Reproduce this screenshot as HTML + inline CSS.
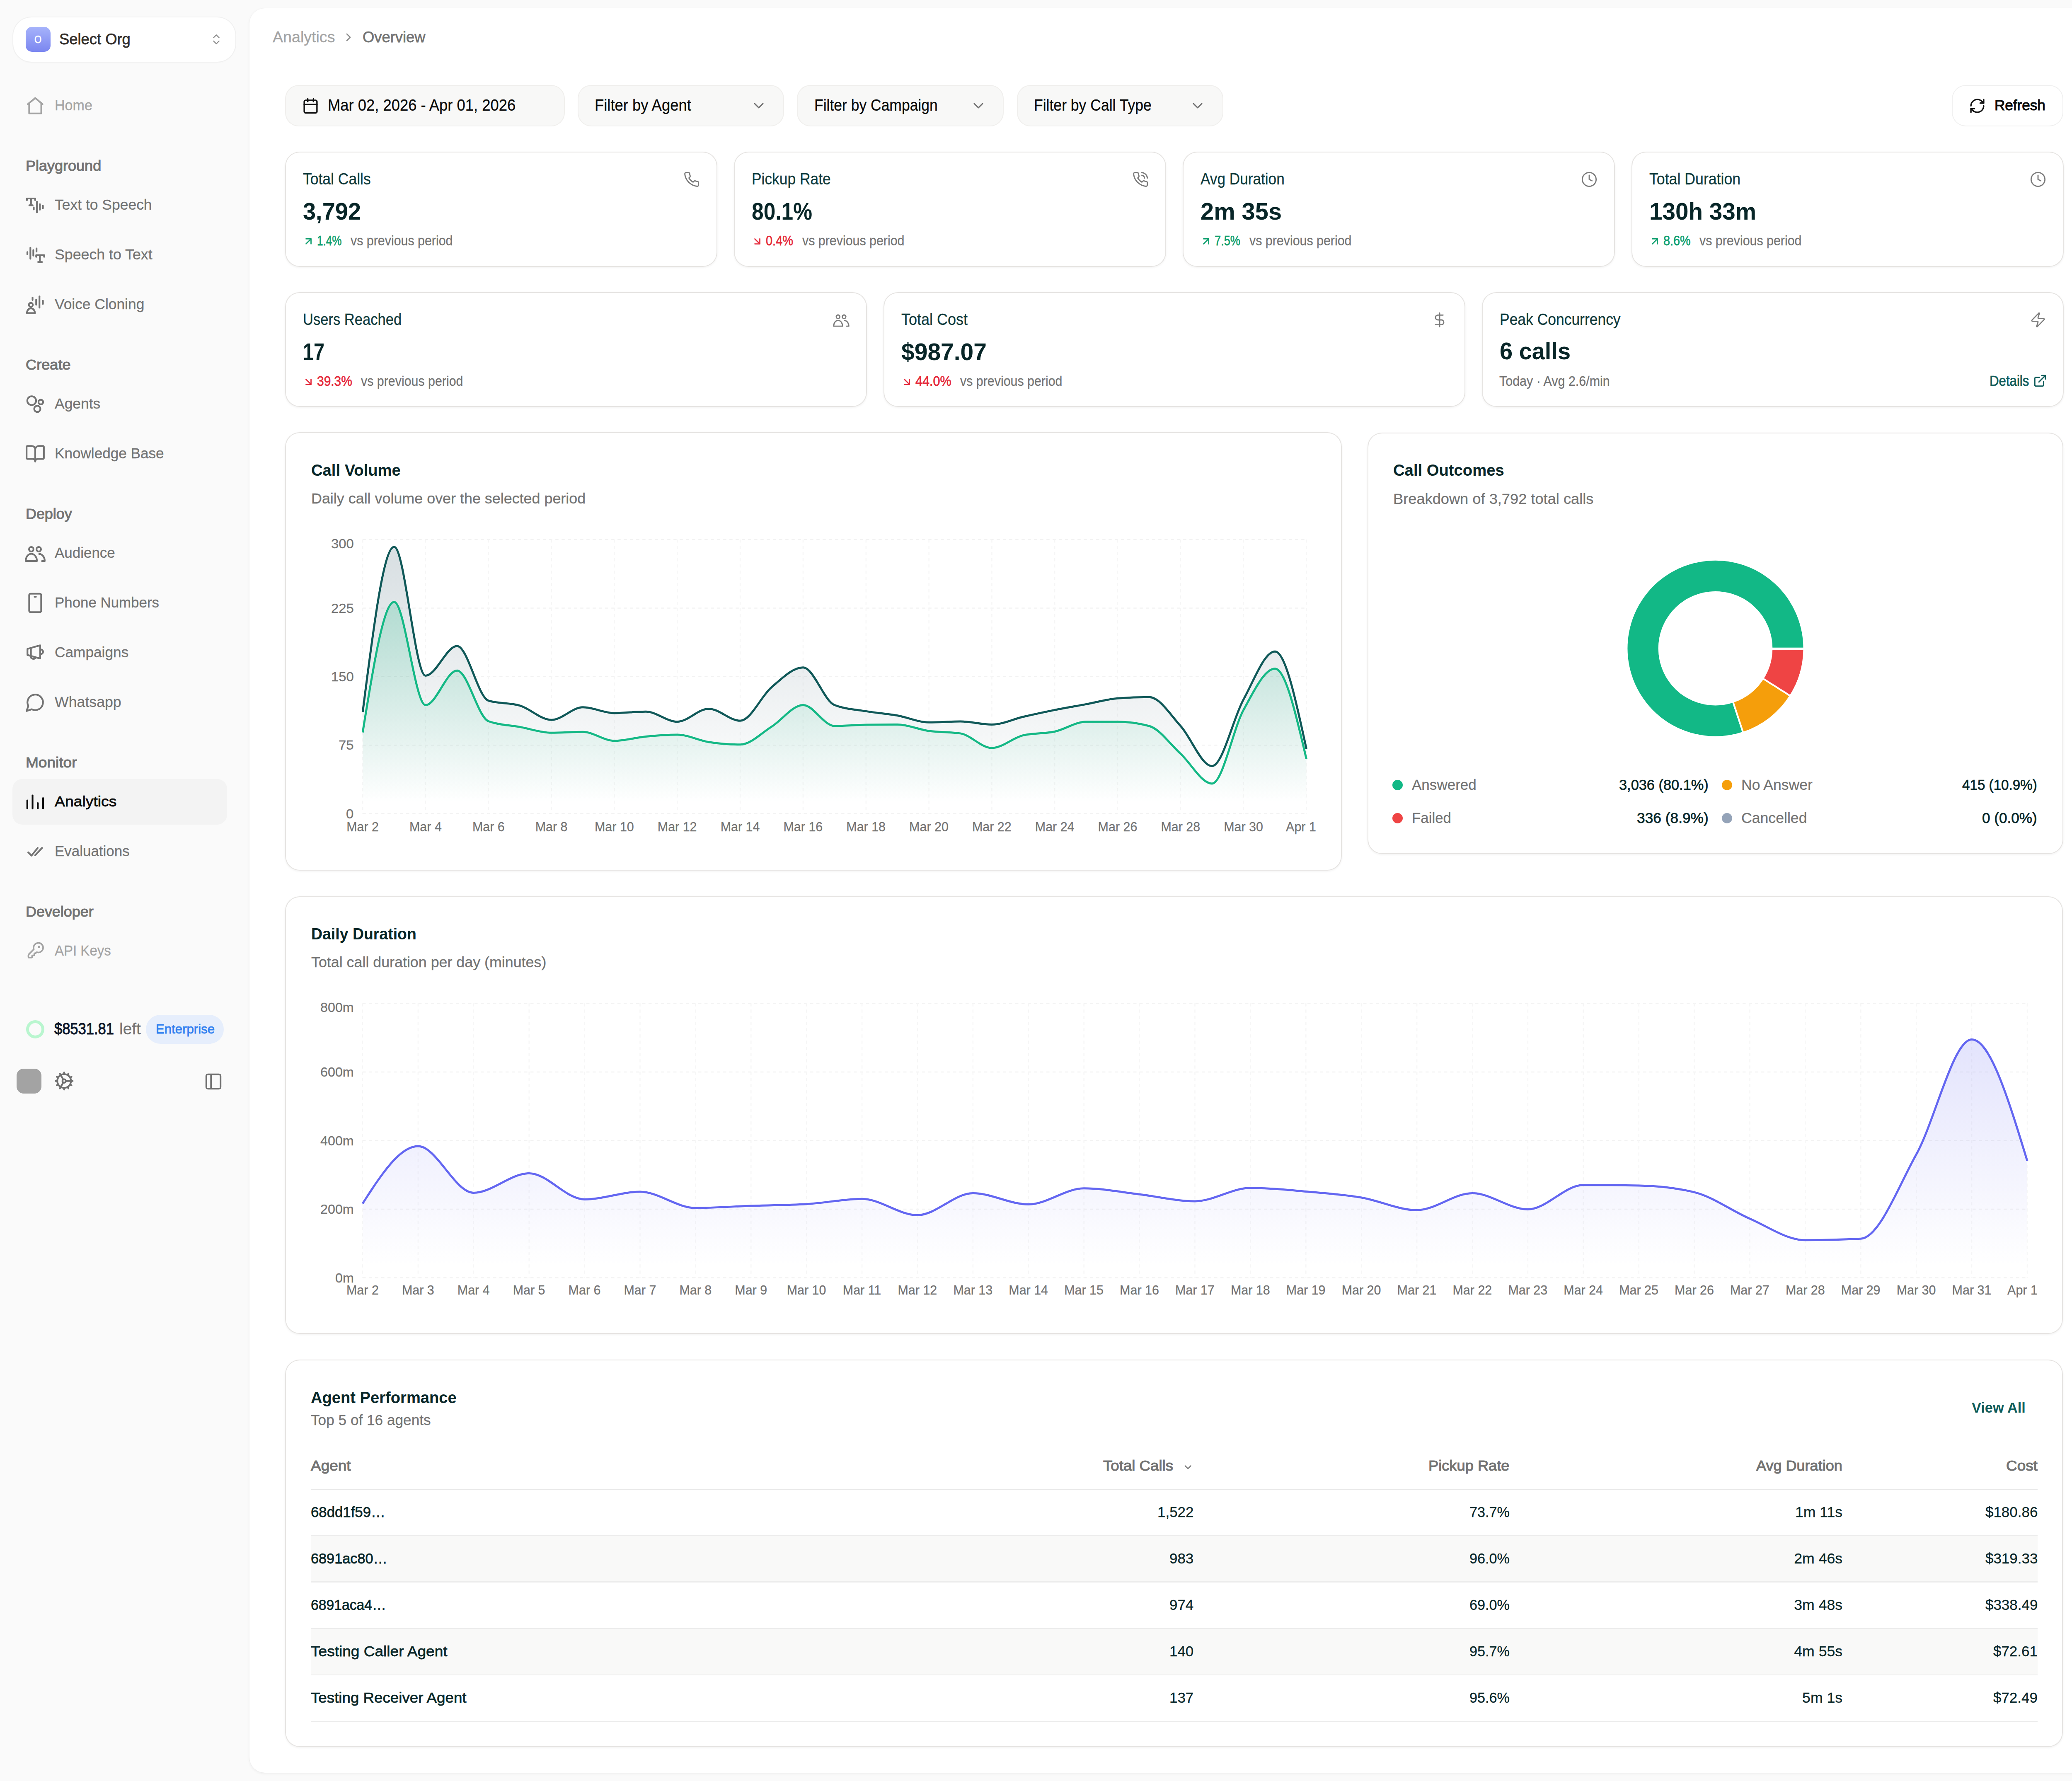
<!DOCTYPE html>
<html><head><meta charset="utf-8"><title>Analytics Overview</title>
<style>
html,body{margin:0;padding:0;}
body{width:5080px;height:4298px;position:relative;overflow:hidden;background:#fafafa;font-family:"Liberation Sans",sans-serif;}
.inset{position:absolute;left:602px;top:19.5px;width:4458px;height:4258px;background:#fff;border-radius:37px;box-shadow:0 0 2px rgba(0,0,0,0.06),0 2px 7px rgba(0,0,0,0.06);}
.botline{position:absolute;left:0;top:4277.5px;width:5080px;height:1.5px;background:#fff;}
.t{position:absolute;white-space:nowrap;line-height:1;transform-origin:0 0;}
.b{position:absolute;}
.ic{position:absolute;overflow:visible;}
.ch{position:absolute;left:0;top:0;pointer-events:none;}
</style></head><body>
<div class="inset"></div>
<div class="b" style="left:31.5px;top:41.5px;width:536.5px;height:107.0px;background:#fff;border-radius:44px;box-shadow:0 0 0 2px #f0f0f0,0 2px 4px rgba(0,0,0,0.03)"></div>
<div class="b" style="left:62.0px;top:64.6px;width:60.0px;height:60.0px;border-radius:15px;background:linear-gradient(180deg,#a6b3fb,#7b86f0)"></div>
<div class="t" style="left:83.4px;top:81.8px;font-size:26.08px;letter-spacing:0.00px;color:#ffffff;font-weight:400;-webkit-text-stroke:0.75px #ffffff;transform:scaleX(0.8500);">O</div>
<div class="t" style="left:143.0px;top:76.2px;font-size:37.36px;letter-spacing:0.00px;color:#332e2a;font-weight:400;-webkit-text-stroke:0.75px #332e2a;transform:scaleX(0.9735);">Select Org</div>
<svg class="ic" style="left:506.0px;top:78.5px;width:32.0px;height:32.0px" viewBox="0 0 24 24" fill="none" stroke="#8c8c8c" stroke-width="1.8" stroke-linecap="round" stroke-linejoin="round"><path d="m7 15 5 5 5-5"/><path d="m7 9 5-5 5 5"/></svg>
<svg class="ic" style="left:60.0px;top:229.5px;width:50.0px;height:50.0px" viewBox="0 0 24 24" fill="none" stroke="#a3a3a3" stroke-width="2.0" stroke-linecap="round" stroke-linejoin="round"><path d="M3.5 10.2 12 3.2l8.5 7"/><path d="M5 9v12h14V9"/></svg>
<div class="t" style="left:131.5px;top:236.4px;font-size:35.95px;letter-spacing:0.00px;color:#a3a3a3;font-weight:400;-webkit-text-stroke:0.3px #a3a3a3;transform:scaleX(0.9476);">Home</div>
<div class="t" style="left:62.0px;top:382.6px;font-size:34.54px;letter-spacing:0.00px;color:#737373;font-weight:400;-webkit-text-stroke:1.15px #737373;transform:scaleX(1.0427);">Playground</div>
<svg class="ic" style="left:60.0px;top:469.5px;width:50.0px;height:50.0px" viewBox="0 0 24 24" fill="none" stroke="#737373" stroke-width="2.0" stroke-linecap="round" stroke-linejoin="round"><path d="M2.4 6.2V4.3h9.5v1.9"/><path d="M7.1 4.3v7.9"/><path d="M5.2 12.2h3.8"/><path d="M10.3 14.7v2.3"/><path d="M14 8v12.4"/><path d="M17.4 10.9v6.4"/><path d="M20.9 12.8v2.8"/></svg>
<div class="t" style="left:131.5px;top:476.4px;font-size:35.95px;letter-spacing:0.00px;color:#737373;font-weight:400;-webkit-text-stroke:0.3px #737373;transform:scaleX(0.9868);">Text to Speech</div>
<svg class="ic" style="left:60.0px;top:589.5px;width:50.0px;height:50.0px" viewBox="0 0 24 24" fill="none" stroke="#737373" stroke-width="2.0" stroke-linecap="round" stroke-linejoin="round"><path d="M2.9 8.8v2.7"/><path d="M6.4 3.7v12.8"/><path d="M9.8 6.5v6.4"/><path d="M13.5 4.6v3.6"/><path d="M13.1 14.3v-1.9h9.2v1.9"/><path d="M17.4 12.4v7.9"/><path d="M15.4 20.3h4.4"/></svg>
<div class="t" style="left:131.5px;top:596.4px;font-size:35.95px;letter-spacing:0.00px;color:#737373;font-weight:400;-webkit-text-stroke:0.3px #737373;transform:scaleX(0.9937);">Speech to Text</div>
<svg class="ic" style="left:60.0px;top:709.5px;width:50.0px;height:50.0px" viewBox="0 0 24 24" fill="none" stroke="#737373" stroke-width="2.0" stroke-linecap="round" stroke-linejoin="round"><circle cx="6.9" cy="12.3" r="2.3"/><path d="M2.4 21.9a4.63 5.6 0 0 1 9.26 0z"/><path d="M8.9 3.9v2.8"/><path d="M13.1 6.2v6"/><path d="M16.9 2.5v13"/><path d="M20.9 7.6v3.7"/></svg>
<div class="t" style="left:131.5px;top:716.4px;font-size:35.95px;letter-spacing:0.00px;color:#737373;font-weight:400;-webkit-text-stroke:0.3px #737373;transform:scaleX(0.9843);">Voice Cloning</div>
<div class="t" style="left:62.0px;top:862.6px;font-size:34.54px;letter-spacing:0.00px;color:#737373;font-weight:400;-webkit-text-stroke:1.15px #737373;transform:scaleX(1.0478);">Create</div>
<svg class="ic" style="left:60.0px;top:949.5px;width:50.0px;height:50.0px" viewBox="0 0 24 24" fill="none" stroke="#737373" stroke-width="2.0" stroke-linecap="round" stroke-linejoin="round"><circle cx="7.9" cy="8.1" r="5.1"/><circle cx="18.5" cy="9.7" r="2.7"/><circle cx="14.4" cy="17.6" r="3.6"/></svg>
<div class="t" style="left:131.5px;top:956.4px;font-size:35.95px;letter-spacing:0.00px;color:#737373;font-weight:400;-webkit-text-stroke:0.3px #737373;transform:scaleX(0.9859);">Agents</div>
<svg class="ic" style="left:60.0px;top:1069.5px;width:50.0px;height:50.0px" viewBox="0 0 24 24" fill="none" stroke="#737373" stroke-width="2.0" stroke-linecap="round" stroke-linejoin="round"><path d="M12 7v14"/><path d="M3 18a1 1 0 0 1-1-1V4a1 1 0 0 1 1-1h5a4 4 0 0 1 4 4 4 4 0 0 1 4-4h5a1 1 0 0 1 1 1v13a1 1 0 0 1-1 1h-6a3 3 0 0 0-3 3 3 3 0 0 0-3-3z"/></svg>
<div class="t" style="left:131.5px;top:1076.4px;font-size:35.95px;letter-spacing:0.00px;color:#737373;font-weight:400;-webkit-text-stroke:0.3px #737373;transform:scaleX(0.9771);">Knowledge Base</div>
<div class="t" style="left:62.0px;top:1222.6px;font-size:34.54px;letter-spacing:0.00px;color:#737373;font-weight:400;-webkit-text-stroke:1.15px #737373;transform:scaleX(1.0383);">Deploy</div>
<svg class="ic" style="left:60.0px;top:1309.5px;width:50.0px;height:50.0px" viewBox="0 0 24 24" fill="none" stroke="#737373" stroke-width="2.0" stroke-linecap="round" stroke-linejoin="round"><circle cx="7.4" cy="7.4" r="2.6"/><circle cx="16.1" cy="7.4" r="2.6"/><path d="M1 21.1a6.47 8.4 0 0 1 12.94 0z"/><path d="M16.6 12.9a6.4 8.2 0 0 1 6.4 8.2h-3.2"/></svg>
<div class="t" style="left:131.5px;top:1316.4px;font-size:35.95px;letter-spacing:0.00px;color:#737373;font-weight:400;-webkit-text-stroke:0.3px #737373;transform:scaleX(0.9726);">Audience</div>
<svg class="ic" style="left:60.0px;top:1429.5px;width:50.0px;height:50.0px" viewBox="0 0 24 24" fill="none" stroke="#737373" stroke-width="2.0" stroke-linecap="round" stroke-linejoin="round"><rect width="13.9" height="21.4" x="5" y="1.3" rx="1.6"/><path d="M11.2 4.9h1.6"/></svg>
<div class="t" style="left:131.5px;top:1436.4px;font-size:35.95px;letter-spacing:0.00px;color:#737373;font-weight:400;-webkit-text-stroke:0.3px #737373;transform:scaleX(0.9702);">Phone Numbers</div>
<svg class="ic" style="left:60.0px;top:1549.5px;width:50.0px;height:50.0px" viewBox="0 0 24 24" fill="none" stroke="#737373" stroke-width="2.0" stroke-linecap="round" stroke-linejoin="round"><path d="M3 7.7 17.7 3.5v15.3L3 14.7z"/><path d="M7 6.8v9"/><path d="M18.2 8.3a2.9 2.7 0 0 1 0 5.4"/><path d="M6.6 16.1a3.3 3.3 0 0 0 6.1 1.5"/></svg>
<div class="t" style="left:131.5px;top:1556.4px;font-size:35.95px;letter-spacing:0.00px;color:#737373;font-weight:400;-webkit-text-stroke:0.3px #737373;transform:scaleX(0.9808);">Campaigns</div>
<svg class="ic" style="left:60.0px;top:1669.5px;width:50.0px;height:50.0px" viewBox="0 0 24 24" fill="none" stroke="#737373" stroke-width="2.0" stroke-linecap="round" stroke-linejoin="round"><path d="M7.9 20A9 9 0 1 0 4 16.1L2 22Z"/></svg>
<div class="t" style="left:131.5px;top:1676.4px;font-size:35.95px;letter-spacing:0.00px;color:#737373;font-weight:400;-webkit-text-stroke:0.3px #737373;transform:scaleX(0.9933);">Whatsapp</div>
<div class="t" style="left:62.0px;top:1822.6px;font-size:34.54px;letter-spacing:0.00px;color:#737373;font-weight:400;-webkit-text-stroke:1.15px #737373;transform:scaleX(1.0727);">Monitor</div>
<div class="b" style="left:30.0px;top:1880.0px;width:517.5px;height:110.0px;background:#f3f3f3;border-radius:24px"></div>
<svg class="ic" style="left:60.0px;top:1909.5px;width:50.0px;height:50.0px" viewBox="0 0 24 24" fill="none" stroke="#0a0a0a" stroke-width="2.0" stroke-linecap="round" stroke-linejoin="round"><path d="M2.8 10.3v9.4"/><path d="M8.9 4.6v15.1"/><path d="M15 13.5v6.2"/><path d="M21.1 7.7v12"/></svg>
<div class="t" style="left:131.5px;top:1916.4px;font-size:35.95px;letter-spacing:0.00px;color:#0a0a0a;font-weight:400;-webkit-text-stroke:0.75px #0a0a0a;transform:scaleX(1.0392);">Analytics</div>
<svg class="ic" style="left:60.0px;top:2029.5px;width:50.0px;height:50.0px" viewBox="0 0 24 24" fill="none" stroke="#737373" stroke-width="2.0" stroke-linecap="round" stroke-linejoin="round"><path d="M3.9 12.9 7.7 16.7 14.9 7.8"/><path d="M11.9 16.3 19.9 7.8"/></svg>
<div class="t" style="left:131.5px;top:2036.4px;font-size:35.95px;letter-spacing:0.00px;color:#737373;font-weight:400;-webkit-text-stroke:0.3px #737373;transform:scaleX(0.9725);">Evaluations</div>
<div class="t" style="left:62.0px;top:2182.6px;font-size:34.54px;letter-spacing:0.00px;color:#737373;font-weight:400;-webkit-text-stroke:1.15px #737373;transform:scaleX(1.0397);">Developer</div>
<svg class="ic" style="left:64.6px;top:2272.4px;width:42.5px;height:42.5px" viewBox="0 0 24 24" fill="none" stroke="#a3a3a3" stroke-width="2.1" stroke-linecap="round" stroke-linejoin="round"><path d="M2.586 17.414A2 2 0 0 0 2 18.828V21a1 1 0 0 0 1 1h3a1 1 0 0 0 1-1v-1a1 1 0 0 1 1-1h1a1 1 0 0 0 1-1v-1a1 1 0 0 1 1-1h.172a2 2 0 0 0 1.414-.586l.814-.814a6.5 6.5 0 1 0-4-4z"/><circle cx="16.5" cy="7.5" r=".6" fill="#a3a3a3"/></svg>
<div class="t" style="left:131.5px;top:2276.4px;font-size:35.95px;letter-spacing:0.00px;color:#a3a3a3;font-weight:400;-webkit-text-stroke:0.3px #a3a3a3;transform:scaleX(0.9185);">API Keys</div>
<div class="b" style="left:63px;top:2462px;width:44px;height:44px;border-radius:50%;box-sizing:border-box;border:7.5px solid #b9f6cf"></div>
<div class="t" style="left:131.0px;top:2464.0px;font-size:38.63px;letter-spacing:0.00px;color:#0f172a;font-weight:400;-webkit-text-stroke:1.15px #0f172a;transform:scaleX(0.8932);">$8531.81</div>
<div class="t" style="left:287.8px;top:2464.0px;font-size:38.63px;letter-spacing:0.00px;color:#737373;font-weight:400;-webkit-text-stroke:0.3px #737373;transform:scaleX(1.0060);">left</div>
<div class="b" style="left:351.7px;top:2449.3px;width:188.3px;height:69.7px;background:#e6eefc;border-radius:35px"></div>
<div class="t" style="left:375.5px;top:2467.6px;font-size:31.02px;letter-spacing:0.00px;color:#2f7ff0;font-weight:400;-webkit-text-stroke:0.75px #2f7ff0;transform:scaleX(1.0051);">Enterprise</div>
<div class="b" style="left:40.3px;top:2579.4px;width:59.6px;height:59.2px;background:#a3a3a3;border-radius:17px"></div>
<svg class="ic" style="left:130.2px;top:2584.2px;width:49.5px;height:49.5px" viewBox="0 0 24 24" fill="none" stroke="#6f6f6f" stroke-width="2.0" stroke-linecap="round" stroke-linejoin="round"><path d="M12 20a8 8 0 1 0 0-16 8 8 0 0 0 0 16Z"/><path d="M12 14a2 2 0 1 0 0-4 2 2 0 0 0 0 4Z"/><path d="M12 2v2"/><path d="M12 22v-2"/><path d="m17 20.66-1-1.73"/><path d="M11 10.27 7 3.34"/><path d="m20.66 17-1.73-1"/><path d="m3.34 7 1.73 1"/><path d="M14 12h8"/><path d="M2 12h2"/><path d="m20.66 7-1.73 1"/><path d="m3.34 17 1.73-1"/><path d="m17 3.34-1 1.73"/><path d="m11 13.73-4 6.93"/></svg>
<svg class="ic" style="left:492.0px;top:2586.5px;width:46.0px;height:46.0px" viewBox="0 0 24 24" fill="none" stroke="#6f6f6f" stroke-width="2" stroke-linecap="round" stroke-linejoin="round"><rect width="18" height="18" x="3" y="3" rx="2"/><path d="M9 3v18"/></svg>
<div class="t" style="left:657.6px;top:70.8px;font-size:37.22px;letter-spacing:0.00px;color:#a3a3a3;font-weight:400;-webkit-text-stroke:0.3px #a3a3a3;transform:scaleX(1.0104);">Analytics</div>
<svg class="ic" style="left:825.0px;top:74.0px;width:32.0px;height:32.0px" viewBox="0 0 24 24" fill="none" stroke="#8a8a8a" stroke-width="2" stroke-linecap="round" stroke-linejoin="round"><path d="m9 18 6-6-6-6"/></svg>
<div class="t" style="left:874.5px;top:70.8px;font-size:37.22px;letter-spacing:0.00px;color:#737373;font-weight:400;-webkit-text-stroke:0.75px #737373;transform:scaleX(0.9772);">Overview</div>
<div class="b" style="left:688.0px;top:205.0px;width:675.0px;height:99.5px;background:#f8f8f7;border-radius:33px;box-shadow:inset 0 0 0 2px #f0efed"></div>
<svg class="ic" style="left:729.0px;top:235.0px;width:41.0px;height:41.0px" viewBox="0 0 24 24" fill="none" stroke="#111111" stroke-width="2" stroke-linecap="round" stroke-linejoin="round"><path d="M8 2v4"/><path d="M16 2v4"/><rect width="18" height="18" x="3" y="4" rx="2"/><path d="M3 10h18"/></svg>
<div class="t" style="left:791.0px;top:235.2px;font-size:38.07px;letter-spacing:0.00px;color:#0a0a0a;font-weight:400;-webkit-text-stroke:0.3px #0a0a0a;transform:scaleX(0.9561);">Mar 02, 2026 - Apr 01, 2026</div>
<div class="b" style="left:1393.8px;top:205.0px;width:498.2px;height:99.5px;background:#f8f8f7;border-radius:33px;box-shadow:inset 0 0 0 2px #f0efed"></div>
<div class="t" style="left:1435.0px;top:235.2px;font-size:38.07px;letter-spacing:0.00px;color:#0a0a0a;font-weight:400;-webkit-text-stroke:0.3px #0a0a0a;transform:scaleX(0.9567);">Filter by Agent</div>
<svg class="ic" style="left:1811.0px;top:234.5px;width:40.0px;height:40.0px" viewBox="0 0 24 24" fill="none" stroke="#6f6f6f" stroke-width="1.8" stroke-linecap="round" stroke-linejoin="round"><path d="m6 9 6 6 6-6"/></svg>
<div class="b" style="left:1923.0px;top:205.0px;width:499.0px;height:99.5px;background:#f8f8f7;border-radius:33px;box-shadow:inset 0 0 0 2px #f0efed"></div>
<div class="t" style="left:1965.0px;top:235.2px;font-size:38.07px;letter-spacing:0.00px;color:#0a0a0a;font-weight:400;-webkit-text-stroke:0.3px #0a0a0a;transform:scaleX(0.9320);">Filter by Campaign</div>
<svg class="ic" style="left:2341.0px;top:234.5px;width:40.0px;height:40.0px" viewBox="0 0 24 24" fill="none" stroke="#6f6f6f" stroke-width="1.8" stroke-linecap="round" stroke-linejoin="round"><path d="m6 9 6 6 6-6"/></svg>
<div class="b" style="left:2453.7px;top:205.0px;width:498.8px;height:99.5px;background:#f8f8f7;border-radius:33px;box-shadow:inset 0 0 0 2px #f0efed"></div>
<div class="t" style="left:2495.0px;top:235.2px;font-size:38.07px;letter-spacing:0.00px;color:#0a0a0a;font-weight:400;-webkit-text-stroke:0.3px #0a0a0a;transform:scaleX(0.9336);">Filter by Call Type</div>
<svg class="ic" style="left:2870.0px;top:234.5px;width:40.0px;height:40.0px" viewBox="0 0 24 24" fill="none" stroke="#6f6f6f" stroke-width="1.8" stroke-linecap="round" stroke-linejoin="round"><path d="m6 9 6 6 6-6"/></svg>
<div class="b" style="left:4709.5px;top:205.0px;width:269.5px;height:99.5px;background:#fff;border-radius:34px;box-shadow:inset 0 0 0 2px #f0f0f0"></div>
<svg class="ic" style="left:4750.5px;top:234.8px;width:41.0px;height:41.0px" viewBox="0 0 24 24" fill="none" stroke="#111111" stroke-width="2" stroke-linecap="round" stroke-linejoin="round"><path d="M3 12a9 9 0 0 1 9-9 9.75 9.75 0 0 1 6.74 2.74L21 8"/><path d="M21 3v5h-5"/><path d="M21 12a9 9 0 0 1-9 9 9.75 9.75 0 0 1-6.74-2.74L3 16"/><path d="M8 16H3v5"/></svg>
<div class="t" style="left:4813.0px;top:236.7px;font-size:35.67px;letter-spacing:0.00px;color:#0a0a0a;font-weight:400;-webkit-text-stroke:1.15px #0a0a0a;transform:scaleX(0.9840);">Refresh</div>
<div class="b" style="left:688.0px;top:366.0px;width:1043.0px;height:277.5px;background:#fff;border-radius:35px;box-shadow:inset 0 0 0 2px #e6e4e2,0 2px 5px rgba(0,0,0,0.05)"></div>
<div class="t" style="left:730.5px;top:413.2px;font-size:38.63px;letter-spacing:0.00px;color:#0f3a3b;font-weight:400;-webkit-text-stroke:0.3px #0f3a3b;transform:scaleX(0.9188);">Total Calls</div>
<div class="t" style="left:731.0px;top:481.9px;font-size:57.81px;letter-spacing:0.00px;color:#082628;font-weight:700;transform:scaleX(0.9679);">3,792</div>
<svg class="ic" style="left:730.0px;top:568.0px;width:29.0px;height:29.0px" viewBox="0 0 24 24" fill="none" stroke="#0f9f6e" stroke-width="2.3" stroke-linecap="round" stroke-linejoin="round"><path d="M7 7h10v10"/><path d="M7 17 17 7"/></svg>
<div class="t" style="left:764.5px;top:564.3px;font-size:33.41px;letter-spacing:0.00px;color:#0f9f6e;font-weight:400;-webkit-text-stroke:0.75px #0f9f6e;transform:scaleX(0.7829);">1.4%</div>
<div class="t" style="left:846.1px;top:564.3px;font-size:33.41px;letter-spacing:0.00px;color:#737373;font-weight:400;-webkit-text-stroke:0.3px #737373;transform:scaleX(0.9091);">vs previous period</div>
<svg class="ic" style="left:1649.0px;top:413.0px;width:40.0px;height:40.0px" viewBox="0 0 24 24" fill="none" stroke="#7a7a7a" stroke-width="1.7" stroke-linecap="round" stroke-linejoin="round"><path d="M22 16.92v3a2 2 0 0 1-2.18 2 19.79 19.79 0 0 1-8.63-3.07 19.5 19.5 0 0 1-6-6 19.79 19.79 0 0 1-3.07-8.67A2 2 0 0 1 4.11 2h3a2 2 0 0 1 2 1.72 12.84 12.84 0 0 0 .7 2.81 2 2 0 0 1-.45 2.11L8.09 9.91a16 16 0 0 0 6 6l1.270-1.27a2 2 0 0 1 2.11-.45 12.84 12.84 0 0 0 2.81.7A2 2 0 0 1 22 16.92z"/></svg>
<div class="b" style="left:1771.0px;top:366.0px;width:1043.0px;height:277.5px;background:#fff;border-radius:35px;box-shadow:inset 0 0 0 2px #e6e4e2,0 2px 5px rgba(0,0,0,0.05)"></div>
<div class="t" style="left:1813.5px;top:413.2px;font-size:38.63px;letter-spacing:0.00px;color:#0f3a3b;font-weight:400;-webkit-text-stroke:0.3px #0f3a3b;transform:scaleX(0.9154);">Pickup Rate</div>
<div class="t" style="left:1814.0px;top:481.9px;font-size:57.81px;letter-spacing:0.00px;color:#082628;font-weight:700;transform:scaleX(0.8908);">80.1%</div>
<svg class="ic" style="left:1813.0px;top:568.0px;width:29.0px;height:29.0px" viewBox="0 0 24 24" fill="none" stroke="#e5283a" stroke-width="2.3" stroke-linecap="round" stroke-linejoin="round"><path d="m7 7 10 10"/><path d="M17 7v10H7"/></svg>
<div class="t" style="left:1847.5px;top:564.3px;font-size:33.41px;letter-spacing:0.00px;color:#e5283a;font-weight:400;-webkit-text-stroke:0.75px #e5283a;transform:scaleX(0.8670);">0.4%</div>
<div class="t" style="left:1935.5px;top:564.3px;font-size:33.41px;letter-spacing:0.00px;color:#737373;font-weight:400;-webkit-text-stroke:0.3px #737373;transform:scaleX(0.9091);">vs previous period</div>
<svg class="ic" style="left:2732.0px;top:413.0px;width:40.0px;height:40.0px" viewBox="0 0 24 24" fill="none" stroke="#7a7a7a" stroke-width="1.7" stroke-linecap="round" stroke-linejoin="round"><path d="M22 16.92v3a2 2 0 0 1-2.18 2 19.79 19.79 0 0 1-8.63-3.07 19.5 19.5 0 0 1-6-6 19.79 19.79 0 0 1-3.07-8.67A2 2 0 0 1 4.11 2h3a2 2 0 0 1 2 1.72 12.84 12.84 0 0 0 .7 2.81 2 2 0 0 1-.45 2.11L8.09 9.91a16 16 0 0 0 6 6l1.27-1.27a2 2 0 0 1 2.11-.45 12.84 12.84 0 0 0 2.81.7A2 2 0 0 1 22 16.92z"/><path d="M14.05 2a9 9 0 0 1 8 7.94"/><path d="M14.05 6A5 5 0 0 1 18 10"/></svg>
<div class="b" style="left:2854.0px;top:366.0px;width:1043.0px;height:277.5px;background:#fff;border-radius:35px;box-shadow:inset 0 0 0 2px #e6e4e2,0 2px 5px rgba(0,0,0,0.05)"></div>
<div class="t" style="left:2896.5px;top:413.2px;font-size:38.63px;letter-spacing:0.00px;color:#0f3a3b;font-weight:400;-webkit-text-stroke:0.3px #0f3a3b;transform:scaleX(0.9108);">Avg Duration</div>
<div class="t" style="left:2897.0px;top:481.9px;font-size:57.81px;letter-spacing:0.00px;color:#082628;font-weight:700;">2m 35s</div>
<svg class="ic" style="left:2896.0px;top:568.0px;width:29.0px;height:29.0px" viewBox="0 0 24 24" fill="none" stroke="#0f9f6e" stroke-width="2.3" stroke-linecap="round" stroke-linejoin="round"><path d="M7 7h10v10"/><path d="M7 17 17 7"/></svg>
<div class="t" style="left:2930.5px;top:564.3px;font-size:33.41px;letter-spacing:0.00px;color:#0f9f6e;font-weight:400;-webkit-text-stroke:0.75px #0f9f6e;transform:scaleX(0.8144);">7.5%</div>
<div class="t" style="left:3014.5px;top:564.3px;font-size:33.41px;letter-spacing:0.00px;color:#737373;font-weight:400;-webkit-text-stroke:0.3px #737373;transform:scaleX(0.9091);">vs previous period</div>
<svg class="ic" style="left:3815.0px;top:413.0px;width:40.0px;height:40.0px" viewBox="0 0 24 24" fill="none" stroke="#7a7a7a" stroke-width="1.7" stroke-linecap="round" stroke-linejoin="round"><circle cx="12" cy="12" r="10"/><polyline points="12 6 12 12 16 14"/></svg>
<div class="b" style="left:3937.0px;top:366.0px;width:1043.0px;height:277.5px;background:#fff;border-radius:35px;box-shadow:inset 0 0 0 2px #e6e4e2,0 2px 5px rgba(0,0,0,0.05)"></div>
<div class="t" style="left:3979.5px;top:413.2px;font-size:38.63px;letter-spacing:0.00px;color:#0f3a3b;font-weight:400;-webkit-text-stroke:0.3px #0f3a3b;transform:scaleX(0.9238);">Total Duration</div>
<div class="t" style="left:3980.0px;top:481.9px;font-size:57.81px;letter-spacing:0.00px;color:#082628;font-weight:700;transform:scaleX(0.9792);">130h 33m</div>
<svg class="ic" style="left:3979.0px;top:568.0px;width:29.0px;height:29.0px" viewBox="0 0 24 24" fill="none" stroke="#0f9f6e" stroke-width="2.3" stroke-linecap="round" stroke-linejoin="round"><path d="M7 7h10v10"/><path d="M7 17 17 7"/></svg>
<div class="t" style="left:4013.5px;top:564.3px;font-size:33.41px;letter-spacing:0.00px;color:#0f9f6e;font-weight:400;-webkit-text-stroke:0.75px #0f9f6e;transform:scaleX(0.8617);">8.6%</div>
<div class="t" style="left:4101.1px;top:564.3px;font-size:33.41px;letter-spacing:0.00px;color:#737373;font-weight:400;-webkit-text-stroke:0.3px #737373;transform:scaleX(0.9091);">vs previous period</div>
<svg class="ic" style="left:4898.0px;top:413.0px;width:40.0px;height:40.0px" viewBox="0 0 24 24" fill="none" stroke="#7a7a7a" stroke-width="1.7" stroke-linecap="round" stroke-linejoin="round"><circle cx="12" cy="12" r="10"/><polyline points="12 6 12 12 16 14"/></svg>
<div class="b" style="left:688.0px;top:705.0px;width:1404.0px;height:277.0px;background:#fff;border-radius:35px;box-shadow:inset 0 0 0 2px #e6e4e2,0 2px 5px rgba(0,0,0,0.05)"></div>
<div class="t" style="left:730.5px;top:752.2px;font-size:38.63px;letter-spacing:0.00px;color:#0f3a3b;font-weight:400;-webkit-text-stroke:0.3px #0f3a3b;transform:scaleX(0.8946);">Users Reached</div>
<div class="t" style="left:731.0px;top:820.9px;font-size:57.81px;letter-spacing:0.00px;color:#082628;font-weight:700;transform:scaleX(0.8088);">17</div>
<svg class="ic" style="left:730.0px;top:907.0px;width:29.0px;height:29.0px" viewBox="0 0 24 24" fill="none" stroke="#e5283a" stroke-width="2.3" stroke-linecap="round" stroke-linejoin="round"><path d="m7 7 10 10"/><path d="M17 7v10H7"/></svg>
<div class="t" style="left:764.5px;top:903.3px;font-size:33.41px;letter-spacing:0.00px;color:#e5283a;font-weight:400;-webkit-text-stroke:0.75px #e5283a;transform:scaleX(0.8954);">39.3%</div>
<div class="t" style="left:871.3px;top:903.3px;font-size:33.41px;letter-spacing:0.00px;color:#737373;font-weight:400;-webkit-text-stroke:0.3px #737373;transform:scaleX(0.9091);">vs previous period</div>
<svg class="ic" style="left:2010.0px;top:752.0px;width:40.0px;height:40.0px" viewBox="0 0 24 24" fill="none" stroke="#7a7a7a" stroke-width="1.7" stroke-linecap="round" stroke-linejoin="round"><circle cx="7.4" cy="7.4" r="2.6"/><circle cx="16.1" cy="7.4" r="2.6"/><path d="M1 21.1a6.47 8.4 0 0 1 12.94 0z"/><path d="M16.6 12.9a6.4 8.2 0 0 1 6.4 8.2h-3.2"/></svg>
<div class="b" style="left:2132.0px;top:705.0px;width:1404.0px;height:277.0px;background:#fff;border-radius:35px;box-shadow:inset 0 0 0 2px #e6e4e2,0 2px 5px rgba(0,0,0,0.05)"></div>
<div class="t" style="left:2174.5px;top:752.2px;font-size:38.63px;letter-spacing:0.00px;color:#0f3a3b;font-weight:400;-webkit-text-stroke:0.3px #0f3a3b;transform:scaleX(0.9323);">Total Cost</div>
<div class="t" style="left:2175.0px;top:820.9px;font-size:57.81px;letter-spacing:0.00px;color:#082628;font-weight:700;transform:scaleX(0.9860);">$987.07</div>
<svg class="ic" style="left:2174.0px;top:907.0px;width:29.0px;height:29.0px" viewBox="0 0 24 24" fill="none" stroke="#e5283a" stroke-width="2.3" stroke-linecap="round" stroke-linejoin="round"><path d="m7 7 10 10"/><path d="M17 7v10H7"/></svg>
<div class="t" style="left:2208.5px;top:903.3px;font-size:33.41px;letter-spacing:0.00px;color:#e5283a;font-weight:400;-webkit-text-stroke:0.75px #e5283a;transform:scaleX(0.9155);">44.0%</div>
<div class="t" style="left:2317.2px;top:903.3px;font-size:33.41px;letter-spacing:0.00px;color:#737373;font-weight:400;-webkit-text-stroke:0.3px #737373;transform:scaleX(0.9091);">vs previous period</div>
<svg class="ic" style="left:3454.0px;top:752.0px;width:40.0px;height:40.0px" viewBox="0 0 24 24" fill="none" stroke="#7a7a7a" stroke-width="1.7" stroke-linecap="round" stroke-linejoin="round"><line x1="12" x2="12" y1="2" y2="22"/><path d="M17 5H9.5a3.5 3.5 0 0 0 0 7h5a3.5 3.5 0 0 1 0 7H6"/></svg>
<div class="b" style="left:3576.0px;top:705.0px;width:1404.0px;height:277.0px;background:#fff;border-radius:35px;box-shadow:inset 0 0 0 2px #e6e4e2,0 2px 5px rgba(0,0,0,0.05)"></div>
<div class="t" style="left:3618.5px;top:752.2px;font-size:38.63px;letter-spacing:0.00px;color:#0f3a3b;font-weight:400;-webkit-text-stroke:0.3px #0f3a3b;transform:scaleX(0.9177);">Peak Concurrency</div>
<div class="t" style="left:3619.0px;top:818.9px;font-size:57.81px;letter-spacing:0.00px;color:#082628;font-weight:700;transform:scaleX(0.9674);">6 calls</div>
<div class="t" style="left:3618.0px;top:903.3px;font-size:33.41px;letter-spacing:0.00px;color:#737373;font-weight:400;-webkit-text-stroke:0.3px #737373;transform:scaleX(0.9108);">Today · Avg 2.6/min</div>
<div class="t" style="left:4801.0px;top:902.3px;font-size:34.54px;letter-spacing:0.00px;color:#0f5c5a;font-weight:400;-webkit-text-stroke:0.75px #0f5c5a;transform:scaleX(0.9037);">Details</div>
<svg class="ic" style="left:4906.0px;top:902.0px;width:34.0px;height:34.0px" viewBox="0 0 24 24" fill="none" stroke="#0f5c5a" stroke-width="2.1" stroke-linecap="round" stroke-linejoin="round"><path d="M15 3h6v6"/><path d="M10 14 21 3"/><path d="M18 13v6a2 2 0 0 1-2 2H5a2 2 0 0 1-2-2V8a2 2 0 0 1 2-2h6"/></svg>
<svg class="ic" style="left:4898.0px;top:752.0px;width:40.0px;height:40.0px" viewBox="0 0 24 24" fill="none" stroke="#7a7a7a" stroke-width="1.7" stroke-linecap="round" stroke-linejoin="round"><path d="M4 14a1 1 0 0 1-.78-1.63l9.9-10.2a.5.5 0 0 1 .86.46l-1.92 6.02A1 1 0 0 0 13 10h7a1 1 0 0 1 .78 1.63l-9.9 10.2a.5.5 0 0 1-.86-.46l1.92-6.02A1 1 0 0 0 11 14z"/></svg>
<div class="b" style="left:688.0px;top:1043.4px;width:2550.0px;height:1057.6px;background:#fff;border-radius:35px;box-shadow:inset 0 0 0 2px #e6e4e2,0 2px 5px rgba(0,0,0,0.05)"></div>
<div class="t" style="left:750.5px;top:1115.5px;font-size:38.77px;letter-spacing:0.00px;color:#082628;font-weight:700;transform:scaleX(0.9854);">Call Volume</div>
<div class="t" style="left:750.5px;top:1185.7px;font-size:35.67px;letter-spacing:0.00px;color:#737373;font-weight:400;-webkit-text-stroke:0.3px #737373;transform:scaleX(1.0064);">Daily call volume over the selected period</div>
<div class="t" style="left:835.3px;top:1948.7px;font-size:30.45px;letter-spacing:0.00px;color:#737373;font-weight:400;-webkit-text-stroke:0.3px #737373;transform:scaleX(1.0800);">0</div>
<div class="t" style="left:817.0px;top:1783.3px;font-size:30.45px;letter-spacing:0.00px;color:#737373;font-weight:400;-webkit-text-stroke:0.3px #737373;transform:scaleX(1.0800);">75</div>
<div class="t" style="left:798.6px;top:1617.9px;font-size:30.45px;letter-spacing:0.00px;color:#737373;font-weight:400;-webkit-text-stroke:0.3px #737373;transform:scaleX(1.0800);">150</div>
<div class="t" style="left:798.6px;top:1452.5px;font-size:30.45px;letter-spacing:0.00px;color:#737373;font-weight:400;-webkit-text-stroke:0.3px #737373;transform:scaleX(1.0800);">225</div>
<div class="t" style="left:798.6px;top:1296.6px;font-size:30.45px;letter-spacing:0.00px;color:#737373;font-weight:400;-webkit-text-stroke:0.3px #737373;transform:scaleX(1.0800);">300</div>
<div class="t" style="left:836.2px;top:1980.1px;font-size:30.45px;letter-spacing:0.00px;color:#737373;font-weight:400;-webkit-text-stroke:0.3px #737373;">Mar 2</div>
<div class="t" style="left:988.0px;top:1980.1px;font-size:30.45px;letter-spacing:0.00px;color:#737373;font-weight:400;-webkit-text-stroke:0.3px #737373;">Mar 4</div>
<div class="t" style="left:1139.9px;top:1980.1px;font-size:30.45px;letter-spacing:0.00px;color:#737373;font-weight:400;-webkit-text-stroke:0.3px #737373;">Mar 6</div>
<div class="t" style="left:1291.7px;top:1980.1px;font-size:30.45px;letter-spacing:0.00px;color:#737373;font-weight:400;-webkit-text-stroke:0.3px #737373;">Mar 8</div>
<div class="t" style="left:1435.0px;top:1980.1px;font-size:30.45px;letter-spacing:0.00px;color:#737373;font-weight:400;-webkit-text-stroke:0.3px #737373;">Mar 10</div>
<div class="t" style="left:1586.8px;top:1980.1px;font-size:30.45px;letter-spacing:0.00px;color:#737373;font-weight:400;-webkit-text-stroke:0.3px #737373;">Mar 12</div>
<div class="t" style="left:1738.7px;top:1980.1px;font-size:30.45px;letter-spacing:0.00px;color:#737373;font-weight:400;-webkit-text-stroke:0.3px #737373;">Mar 14</div>
<div class="t" style="left:1890.5px;top:1980.1px;font-size:30.45px;letter-spacing:0.00px;color:#737373;font-weight:400;-webkit-text-stroke:0.3px #737373;">Mar 16</div>
<div class="t" style="left:2042.3px;top:1980.1px;font-size:30.45px;letter-spacing:0.00px;color:#737373;font-weight:400;-webkit-text-stroke:0.3px #737373;">Mar 18</div>
<div class="t" style="left:2194.1px;top:1980.1px;font-size:30.45px;letter-spacing:0.00px;color:#737373;font-weight:400;-webkit-text-stroke:0.3px #737373;">Mar 20</div>
<div class="t" style="left:2345.9px;top:1980.1px;font-size:30.45px;letter-spacing:0.00px;color:#737373;font-weight:400;-webkit-text-stroke:0.3px #737373;">Mar 22</div>
<div class="t" style="left:2497.8px;top:1980.1px;font-size:30.45px;letter-spacing:0.00px;color:#737373;font-weight:400;-webkit-text-stroke:0.3px #737373;">Mar 24</div>
<div class="t" style="left:2649.6px;top:1980.1px;font-size:30.45px;letter-spacing:0.00px;color:#737373;font-weight:400;-webkit-text-stroke:0.3px #737373;">Mar 26</div>
<div class="t" style="left:2801.4px;top:1980.1px;font-size:30.45px;letter-spacing:0.00px;color:#737373;font-weight:400;-webkit-text-stroke:0.3px #737373;">Mar 28</div>
<div class="t" style="left:2953.2px;top:1980.1px;font-size:30.45px;letter-spacing:0.00px;color:#737373;font-weight:400;-webkit-text-stroke:0.3px #737373;">Mar 30</div>
<div class="t" style="left:3103.1px;top:1980.1px;font-size:30.45px;letter-spacing:0.00px;color:#737373;font-weight:400;-webkit-text-stroke:0.3px #737373;">Apr 1</div>
<div class="b" style="left:3300.0px;top:1044.0px;width:1679.0px;height:1017.0px;background:#fff;border-radius:35px;box-shadow:inset 0 0 0 2px #e6e4e2,0 2px 5px rgba(0,0,0,0.05)"></div>
<div class="t" style="left:3362.0px;top:1116.0px;font-size:38.77px;letter-spacing:0.00px;color:#082628;font-weight:700;transform:scaleX(0.9865);">Call Outcomes</div>
<div class="t" style="left:3362.0px;top:1186.7px;font-size:35.67px;letter-spacing:0.00px;color:#737373;font-weight:400;-webkit-text-stroke:0.3px #737373;transform:scaleX(1.0162);">Breakdown of 3,792 total calls</div>
<div class="b" style="left:3360.2px;top:1882.1px;width:25px;height:25px;border-radius:50%;background:#12b886"></div>
<div class="t" style="left:3407.2px;top:1877.3px;font-size:35.67px;letter-spacing:0.00px;color:#737373;font-weight:400;-webkit-text-stroke:0.3px #737373;transform:scaleX(0.9827);">Answered</div>
<div class="t" style="left:3907.0px;top:1877.3px;font-size:35.67px;letter-spacing:0.00px;color:#082628;font-weight:400;-webkit-text-stroke:0.75px #082628;transform:scaleX(0.9632);">3,036 (80.1%)</div>
<div class="b" style="left:4154.9px;top:1882.1px;width:25px;height:25px;border-radius:50%;background:#f59e0b"></div>
<div class="t" style="left:4201.9px;top:1877.3px;font-size:35.67px;letter-spacing:0.00px;color:#737373;font-weight:400;-webkit-text-stroke:0.3px #737373;transform:scaleX(0.9964);">No Answer</div>
<div class="t" style="left:4735.0px;top:1877.3px;font-size:35.67px;letter-spacing:0.00px;color:#082628;font-weight:400;-webkit-text-stroke:0.75px #082628;transform:scaleX(0.9307);">415 (10.9%)</div>
<div class="b" style="left:3360.2px;top:1961.5px;width:25px;height:25px;border-radius:50%;background:#ef4444"></div>
<div class="t" style="left:3407.2px;top:1956.7px;font-size:35.67px;letter-spacing:0.00px;color:#737373;font-weight:400;-webkit-text-stroke:0.3px #737373;transform:scaleX(0.9770);">Failed</div>
<div class="t" style="left:3950.0px;top:1956.7px;font-size:35.67px;letter-spacing:0.00px;color:#082628;font-weight:400;-webkit-text-stroke:0.75px #082628;transform:scaleX(0.9907);">336 (8.9%)</div>
<div class="b" style="left:4154.9px;top:1961.5px;width:25px;height:25px;border-radius:50%;background:#94a3b8"></div>
<div class="t" style="left:4201.9px;top:1956.7px;font-size:35.67px;letter-spacing:0.00px;color:#737373;font-weight:400;-webkit-text-stroke:0.3px #737373;">Cancelled</div>
<div class="t" style="left:4783.0px;top:1956.7px;font-size:35.67px;letter-spacing:0.00px;color:#082628;font-weight:400;-webkit-text-stroke:0.75px #082628;transform:scaleX(0.9857);">0 (0.0%)</div>
<div class="b" style="left:688.0px;top:2162.7px;width:4290.0px;height:1056.5px;background:#fff;border-radius:35px;box-shadow:inset 0 0 0 2px #e6e4e2,0 2px 5px rgba(0,0,0,0.05)"></div>
<div class="t" style="left:751.0px;top:2234.8px;font-size:38.77px;letter-spacing:0.00px;color:#082628;font-weight:700;transform:scaleX(0.9657);">Daily Duration</div>
<div class="t" style="left:751.0px;top:2305.0px;font-size:35.67px;letter-spacing:0.00px;color:#737373;font-weight:400;-webkit-text-stroke:0.3px #737373;transform:scaleX(1.0044);">Total call duration per day (minutes)</div>
<div class="t" style="left:808.5px;top:3068.7px;font-size:30.45px;letter-spacing:0.00px;color:#737373;font-weight:400;-webkit-text-stroke:0.3px #737373;transform:scaleX(1.0600);">0m</div>
<div class="t" style="left:772.5px;top:2903.1px;font-size:30.45px;letter-spacing:0.00px;color:#737373;font-weight:400;-webkit-text-stroke:0.3px #737373;transform:scaleX(1.0600);">200m</div>
<div class="t" style="left:772.5px;top:2737.6px;font-size:30.45px;letter-spacing:0.00px;color:#737373;font-weight:400;-webkit-text-stroke:0.3px #737373;transform:scaleX(1.0600);">400m</div>
<div class="t" style="left:772.5px;top:2572.0px;font-size:30.45px;letter-spacing:0.00px;color:#737373;font-weight:400;-webkit-text-stroke:0.3px #737373;transform:scaleX(1.0600);">600m</div>
<div class="t" style="left:772.5px;top:2415.9px;font-size:30.45px;letter-spacing:0.00px;color:#737373;font-weight:400;-webkit-text-stroke:0.3px #737373;transform:scaleX(1.0600);">800m</div>
<div class="t" style="left:836.0px;top:3098.3px;font-size:30.45px;letter-spacing:0.00px;color:#737373;font-weight:400;-webkit-text-stroke:0.3px #737373;">Mar 2</div>
<div class="t" style="left:969.9px;top:3098.3px;font-size:30.45px;letter-spacing:0.00px;color:#737373;font-weight:400;-webkit-text-stroke:0.3px #737373;">Mar 3</div>
<div class="t" style="left:1103.8px;top:3098.3px;font-size:30.45px;letter-spacing:0.00px;color:#737373;font-weight:400;-webkit-text-stroke:0.3px #737373;">Mar 4</div>
<div class="t" style="left:1237.7px;top:3098.3px;font-size:30.45px;letter-spacing:0.00px;color:#737373;font-weight:400;-webkit-text-stroke:0.3px #737373;">Mar 5</div>
<div class="t" style="left:1371.6px;top:3098.3px;font-size:30.45px;letter-spacing:0.00px;color:#737373;font-weight:400;-webkit-text-stroke:0.3px #737373;">Mar 6</div>
<div class="t" style="left:1505.5px;top:3098.3px;font-size:30.45px;letter-spacing:0.00px;color:#737373;font-weight:400;-webkit-text-stroke:0.3px #737373;">Mar 7</div>
<div class="t" style="left:1639.4px;top:3098.3px;font-size:30.45px;letter-spacing:0.00px;color:#737373;font-weight:400;-webkit-text-stroke:0.3px #737373;">Mar 8</div>
<div class="t" style="left:1773.3px;top:3098.3px;font-size:30.45px;letter-spacing:0.00px;color:#737373;font-weight:400;-webkit-text-stroke:0.3px #737373;">Mar 9</div>
<div class="t" style="left:1898.7px;top:3098.3px;font-size:30.45px;letter-spacing:0.00px;color:#737373;font-weight:400;-webkit-text-stroke:0.3px #737373;">Mar 10</div>
<div class="t" style="left:2033.8px;top:3098.3px;font-size:30.45px;letter-spacing:0.00px;color:#737373;font-weight:400;-webkit-text-stroke:0.3px #737373;">Mar 11</div>
<div class="t" style="left:2166.5px;top:3098.3px;font-size:30.45px;letter-spacing:0.00px;color:#737373;font-weight:400;-webkit-text-stroke:0.3px #737373;">Mar 12</div>
<div class="t" style="left:2300.4px;top:3098.3px;font-size:30.45px;letter-spacing:0.00px;color:#737373;font-weight:400;-webkit-text-stroke:0.3px #737373;">Mar 13</div>
<div class="t" style="left:2434.3px;top:3098.3px;font-size:30.45px;letter-spacing:0.00px;color:#737373;font-weight:400;-webkit-text-stroke:0.3px #737373;">Mar 14</div>
<div class="t" style="left:2568.2px;top:3098.3px;font-size:30.45px;letter-spacing:0.00px;color:#737373;font-weight:400;-webkit-text-stroke:0.3px #737373;">Mar 15</div>
<div class="t" style="left:2702.1px;top:3098.3px;font-size:30.45px;letter-spacing:0.00px;color:#737373;font-weight:400;-webkit-text-stroke:0.3px #737373;">Mar 16</div>
<div class="t" style="left:2836.0px;top:3098.3px;font-size:30.45px;letter-spacing:0.00px;color:#737373;font-weight:400;-webkit-text-stroke:0.3px #737373;">Mar 17</div>
<div class="t" style="left:2969.9px;top:3098.3px;font-size:30.45px;letter-spacing:0.00px;color:#737373;font-weight:400;-webkit-text-stroke:0.3px #737373;">Mar 18</div>
<div class="t" style="left:3103.8px;top:3098.3px;font-size:30.45px;letter-spacing:0.00px;color:#737373;font-weight:400;-webkit-text-stroke:0.3px #737373;">Mar 19</div>
<div class="t" style="left:3237.7px;top:3098.3px;font-size:30.45px;letter-spacing:0.00px;color:#737373;font-weight:400;-webkit-text-stroke:0.3px #737373;">Mar 20</div>
<div class="t" style="left:3371.6px;top:3098.3px;font-size:30.45px;letter-spacing:0.00px;color:#737373;font-weight:400;-webkit-text-stroke:0.3px #737373;">Mar 21</div>
<div class="t" style="left:3505.5px;top:3098.3px;font-size:30.45px;letter-spacing:0.00px;color:#737373;font-weight:400;-webkit-text-stroke:0.3px #737373;">Mar 22</div>
<div class="t" style="left:3639.4px;top:3098.3px;font-size:30.45px;letter-spacing:0.00px;color:#737373;font-weight:400;-webkit-text-stroke:0.3px #737373;">Mar 23</div>
<div class="t" style="left:3773.3px;top:3098.3px;font-size:30.45px;letter-spacing:0.00px;color:#737373;font-weight:400;-webkit-text-stroke:0.3px #737373;">Mar 24</div>
<div class="t" style="left:3907.2px;top:3098.3px;font-size:30.45px;letter-spacing:0.00px;color:#737373;font-weight:400;-webkit-text-stroke:0.3px #737373;">Mar 25</div>
<div class="t" style="left:4041.1px;top:3098.3px;font-size:30.45px;letter-spacing:0.00px;color:#737373;font-weight:400;-webkit-text-stroke:0.3px #737373;">Mar 26</div>
<div class="t" style="left:4175.0px;top:3098.3px;font-size:30.45px;letter-spacing:0.00px;color:#737373;font-weight:400;-webkit-text-stroke:0.3px #737373;">Mar 27</div>
<div class="t" style="left:4308.9px;top:3098.3px;font-size:30.45px;letter-spacing:0.00px;color:#737373;font-weight:400;-webkit-text-stroke:0.3px #737373;">Mar 28</div>
<div class="t" style="left:4442.8px;top:3098.3px;font-size:30.45px;letter-spacing:0.00px;color:#737373;font-weight:400;-webkit-text-stroke:0.3px #737373;">Mar 29</div>
<div class="t" style="left:4576.7px;top:3098.3px;font-size:30.45px;letter-spacing:0.00px;color:#737373;font-weight:400;-webkit-text-stroke:0.3px #737373;">Mar 30</div>
<div class="t" style="left:4710.6px;top:3098.3px;font-size:30.45px;letter-spacing:0.00px;color:#737373;font-weight:400;-webkit-text-stroke:0.3px #737373;">Mar 31</div>
<div class="t" style="left:4844.1px;top:3098.3px;font-size:30.45px;letter-spacing:0.00px;color:#737373;font-weight:400;-webkit-text-stroke:0.3px #737373;">Apr 1</div>
<div class="b" style="left:688.0px;top:3281.4px;width:4290.0px;height:934.2px;background:#fff;border-radius:35px;box-shadow:inset 0 0 0 2px #e6e4e2,0 2px 5px rgba(0,0,0,0.05)"></div>
<div class="t" style="left:750.2px;top:3353.8px;font-size:38.77px;letter-spacing:0.00px;color:#082628;font-weight:700;transform:scaleX(0.9835);">Agent Performance</div>
<div class="t" style="left:750.2px;top:3410.0px;font-size:35.67px;letter-spacing:0.00px;color:#737373;font-weight:400;-webkit-text-stroke:0.3px #737373;transform:scaleX(0.9872);">Top 5 of 16 agents</div>
<div class="t" style="left:4757.6px;top:3379.9px;font-size:35.67px;letter-spacing:0.00px;color:#0f5c5a;font-weight:700;transform:scaleX(0.9635);">View All</div>
<div class="t" style="left:750.2px;top:3520.2px;font-size:35.67px;letter-spacing:0.00px;color:#737373;font-weight:400;-webkit-text-stroke:1.15px #737373;transform:scaleX(1.0365);">Agent</div>
<div class="t" style="left:2662.4px;top:3520.2px;font-size:35.67px;letter-spacing:0.00px;color:#737373;font-weight:400;-webkit-text-stroke:1.15px #737373;transform:scaleX(1.0281);">Total Calls</div>
<svg class="ic" style="left:2853.3px;top:3527.0px;width:27.4px;height:27.4px" viewBox="0 0 24 24" fill="none" stroke="#7a7a7a" stroke-width="2.2" stroke-linecap="round" stroke-linejoin="round"><path d="m6 9 6 6 6-6"/></svg>
<div class="t" style="left:3447.3px;top:3520.2px;font-size:35.67px;letter-spacing:0.00px;color:#737373;font-weight:400;-webkit-text-stroke:1.15px #737373;transform:scaleX(1.0167);">Pickup Rate</div>
<div class="t" style="left:4238.3px;top:3520.2px;font-size:35.67px;letter-spacing:0.00px;color:#737373;font-weight:400;-webkit-text-stroke:1.15px #737373;transform:scaleX(1.0110);">Avg Duration</div>
<div class="t" style="left:4841.1px;top:3520.2px;font-size:35.67px;letter-spacing:0.00px;color:#737373;font-weight:400;-webkit-text-stroke:1.15px #737373;transform:scaleX(1.0340);">Cost</div>
<div class="b" style="left:750.2px;top:3592.7px;width:4166.8px;height:2.5px;background:#e8e8e8"></div>
<div class="b" style="left:750.2px;top:3704.2px;width:4166.8px;height:2.3px;background:#ececec"></div>
<div class="t" style="left:750.2px;top:3631.6px;font-size:35.67px;letter-spacing:0.00px;color:#082628;font-weight:400;-webkit-text-stroke:0.75px #082628;transform:scaleX(0.9751);">68dd1f59…</div>
<div class="t" style="left:2793.0px;top:3631.6px;font-size:35.67px;letter-spacing:0.00px;color:#082628;font-weight:400;-webkit-text-stroke:0.3px #082628;transform:scaleX(0.9800);">1,522</div>
<div class="t" style="left:3545.8px;top:3631.6px;font-size:35.67px;letter-spacing:0.00px;color:#082628;font-weight:400;-webkit-text-stroke:0.3px #082628;transform:scaleX(0.9600);">73.7%</div>
<div class="t" style="left:4331.9px;top:3631.6px;font-size:35.67px;letter-spacing:0.00px;color:#082628;font-weight:400;-webkit-text-stroke:0.3px #082628;">1m 11s</div>
<div class="t" style="left:4790.5px;top:3631.6px;font-size:35.67px;letter-spacing:0.00px;color:#082628;font-weight:400;-webkit-text-stroke:0.3px #082628;transform:scaleX(0.9800);">$180.86</div>
<div class="b" style="left:750.2px;top:3706.2px;width:4166.8px;height:112.2px;background:#f9f9f8"></div>
<div class="b" style="left:750.2px;top:3816.4px;width:4166.8px;height:2.3px;background:#ececec"></div>
<div class="t" style="left:750.2px;top:3743.7px;font-size:35.67px;letter-spacing:0.00px;color:#082628;font-weight:400;-webkit-text-stroke:0.75px #082628;transform:scaleX(0.9609);">6891ac80…</div>
<div class="t" style="left:2822.2px;top:3743.7px;font-size:35.67px;letter-spacing:0.00px;color:#082628;font-weight:400;-webkit-text-stroke:0.3px #082628;transform:scaleX(0.9800);">983</div>
<div class="t" style="left:3545.8px;top:3743.7px;font-size:35.67px;letter-spacing:0.00px;color:#082628;font-weight:400;-webkit-text-stroke:0.3px #082628;transform:scaleX(0.9600);">96.0%</div>
<div class="t" style="left:4329.2px;top:3743.7px;font-size:35.67px;letter-spacing:0.00px;color:#082628;font-weight:400;-webkit-text-stroke:0.3px #082628;">2m 46s</div>
<div class="t" style="left:4790.5px;top:3743.7px;font-size:35.67px;letter-spacing:0.00px;color:#082628;font-weight:400;-webkit-text-stroke:0.3px #082628;transform:scaleX(0.9800);">$319.33</div>
<div class="b" style="left:750.2px;top:3928.6px;width:4166.8px;height:2.3px;background:#ececec"></div>
<div class="t" style="left:750.2px;top:3855.8px;font-size:35.67px;letter-spacing:0.00px;color:#082628;font-weight:400;-webkit-text-stroke:0.75px #082628;transform:scaleX(0.9453);">6891aca4…</div>
<div class="t" style="left:2822.2px;top:3855.8px;font-size:35.67px;letter-spacing:0.00px;color:#082628;font-weight:400;-webkit-text-stroke:0.3px #082628;transform:scaleX(0.9800);">974</div>
<div class="t" style="left:3545.8px;top:3855.8px;font-size:35.67px;letter-spacing:0.00px;color:#082628;font-weight:400;-webkit-text-stroke:0.3px #082628;transform:scaleX(0.9600);">69.0%</div>
<div class="t" style="left:4329.2px;top:3855.8px;font-size:35.67px;letter-spacing:0.00px;color:#082628;font-weight:400;-webkit-text-stroke:0.3px #082628;">3m 48s</div>
<div class="t" style="left:4790.5px;top:3855.8px;font-size:35.67px;letter-spacing:0.00px;color:#082628;font-weight:400;-webkit-text-stroke:0.3px #082628;transform:scaleX(0.9800);">$338.49</div>
<div class="b" style="left:750.2px;top:3930.6px;width:4166.8px;height:112.2px;background:#f9f9f8"></div>
<div class="b" style="left:750.2px;top:4040.8px;width:4166.8px;height:2.3px;background:#ececec"></div>
<div class="t" style="left:750.2px;top:3967.9px;font-size:35.67px;letter-spacing:0.00px;color:#082628;font-weight:400;-webkit-text-stroke:0.75px #082628;transform:scaleX(1.0393);">Testing Caller Agent</div>
<div class="t" style="left:2822.2px;top:3967.9px;font-size:35.67px;letter-spacing:0.00px;color:#082628;font-weight:400;-webkit-text-stroke:0.3px #082628;transform:scaleX(0.9800);">140</div>
<div class="t" style="left:3545.8px;top:3967.9px;font-size:35.67px;letter-spacing:0.00px;color:#082628;font-weight:400;-webkit-text-stroke:0.3px #082628;transform:scaleX(0.9600);">95.7%</div>
<div class="t" style="left:4329.2px;top:3967.9px;font-size:35.67px;letter-spacing:0.00px;color:#082628;font-weight:400;-webkit-text-stroke:0.3px #082628;">4m 55s</div>
<div class="t" style="left:4810.0px;top:3967.9px;font-size:35.67px;letter-spacing:0.00px;color:#082628;font-weight:400;-webkit-text-stroke:0.3px #082628;transform:scaleX(0.9800);">$72.61</div>
<div class="b" style="left:750.2px;top:4153.0px;width:4166.8px;height:2.3px;background:#ececec"></div>
<div class="t" style="left:750.2px;top:4080.0px;font-size:35.67px;letter-spacing:0.00px;color:#082628;font-weight:400;-webkit-text-stroke:0.75px #082628;transform:scaleX(1.0297);">Testing Receiver Agent</div>
<div class="t" style="left:2822.2px;top:4080.0px;font-size:35.67px;letter-spacing:0.00px;color:#082628;font-weight:400;-webkit-text-stroke:0.3px #082628;transform:scaleX(0.9800);">137</div>
<div class="t" style="left:3545.8px;top:4080.0px;font-size:35.67px;letter-spacing:0.00px;color:#082628;font-weight:400;-webkit-text-stroke:0.3px #082628;transform:scaleX(0.9600);">95.6%</div>
<div class="t" style="left:4349.1px;top:4080.0px;font-size:35.67px;letter-spacing:0.00px;color:#082628;font-weight:400;-webkit-text-stroke:0.3px #082628;">5m 1s</div>
<div class="t" style="left:4810.0px;top:4080.0px;font-size:35.67px;letter-spacing:0.00px;color:#082628;font-weight:400;-webkit-text-stroke:0.3px #082628;transform:scaleX(0.9800);">$72.49</div>
<svg class="ch" width="5080" height="4298" viewBox="0 0 5080 4298"><line x1="875.2" x2="3152.5" y1="1963.6" y2="1963.6" stroke="#f2f2f2" stroke-width="2.5" stroke-dasharray="7.5 7.5"/><line x1="875.2" x2="3152.5" y1="1798.2" y2="1798.2" stroke="#f2f2f2" stroke-width="2.5" stroke-dasharray="7.5 7.5"/><line x1="875.2" x2="3152.5" y1="1632.8" y2="1632.8" stroke="#f2f2f2" stroke-width="2.5" stroke-dasharray="7.5 7.5"/><line x1="875.2" x2="3152.5" y1="1467.4" y2="1467.4" stroke="#f2f2f2" stroke-width="2.5" stroke-dasharray="7.5 7.5"/><line x1="875.2" x2="3152.5" y1="1302.0" y2="1302.0" stroke="#f2f2f2" stroke-width="2.5" stroke-dasharray="7.5 7.5"/><line x1="875.2" x2="875.2" y1="1302.0" y2="1963.6" stroke="#f6f6f6" stroke-width="2.5" stroke-dasharray="7.5 7.5"/><line x1="1027.0" x2="1027.0" y1="1302.0" y2="1963.6" stroke="#f6f6f6" stroke-width="2.5" stroke-dasharray="7.5 7.5"/><line x1="1178.8" x2="1178.8" y1="1302.0" y2="1963.6" stroke="#f6f6f6" stroke-width="2.5" stroke-dasharray="7.5 7.5"/><line x1="1330.7" x2="1330.7" y1="1302.0" y2="1963.6" stroke="#f6f6f6" stroke-width="2.5" stroke-dasharray="7.5 7.5"/><line x1="1482.5" x2="1482.5" y1="1302.0" y2="1963.6" stroke="#f6f6f6" stroke-width="2.5" stroke-dasharray="7.5 7.5"/><line x1="1634.3" x2="1634.3" y1="1302.0" y2="1963.6" stroke="#f6f6f6" stroke-width="2.5" stroke-dasharray="7.5 7.5"/><line x1="1786.1" x2="1786.1" y1="1302.0" y2="1963.6" stroke="#f6f6f6" stroke-width="2.5" stroke-dasharray="7.5 7.5"/><line x1="1937.9" x2="1937.9" y1="1302.0" y2="1963.6" stroke="#f6f6f6" stroke-width="2.5" stroke-dasharray="7.5 7.5"/><line x1="2089.8" x2="2089.8" y1="1302.0" y2="1963.6" stroke="#f6f6f6" stroke-width="2.5" stroke-dasharray="7.5 7.5"/><line x1="2241.6" x2="2241.6" y1="1302.0" y2="1963.6" stroke="#f6f6f6" stroke-width="2.5" stroke-dasharray="7.5 7.5"/><line x1="2393.4" x2="2393.4" y1="1302.0" y2="1963.6" stroke="#f6f6f6" stroke-width="2.5" stroke-dasharray="7.5 7.5"/><line x1="2545.2" x2="2545.2" y1="1302.0" y2="1963.6" stroke="#f6f6f6" stroke-width="2.5" stroke-dasharray="7.5 7.5"/><line x1="2697.0" x2="2697.0" y1="1302.0" y2="1963.6" stroke="#f6f6f6" stroke-width="2.5" stroke-dasharray="7.5 7.5"/><line x1="2848.9" x2="2848.9" y1="1302.0" y2="1963.6" stroke="#f6f6f6" stroke-width="2.5" stroke-dasharray="7.5 7.5"/><line x1="3000.7" x2="3000.7" y1="1302.0" y2="1963.6" stroke="#f6f6f6" stroke-width="2.5" stroke-dasharray="7.5 7.5"/><line x1="3152.5" x2="3152.5" y1="1302.0" y2="1963.6" stroke="#f6f6f6" stroke-width="2.5" stroke-dasharray="7.5 7.5"/><defs><linearGradient id="gd" x1="0" y1="0" x2="0" y2="1"><stop offset="5%" stop-color="#2f5566" stop-opacity="0.18"/><stop offset="95%" stop-color="#2f5566" stop-opacity="0"/></linearGradient><linearGradient id="gg" x1="0" y1="0" x2="0" y2="1"><stop offset="5%" stop-color="#10b981" stop-opacity="0.21"/><stop offset="95%" stop-color="#10b981" stop-opacity="0"/></linearGradient><linearGradient id="gi" x1="0" y1="0" x2="0" y2="1"><stop offset="5%" stop-color="#6366f1" stop-opacity="0.17"/><stop offset="95%" stop-color="#6366f1" stop-opacity="0"/></linearGradient></defs><path d="M875.2,1718.7C900.5,1519.2,925.8,1319.7,951.1,1319.7C976.4,1319.7,1001.7,1630.5,1027.0,1630.5C1052.3,1630.5,1077.6,1559.0,1102.9,1559.0C1128.2,1559.0,1153.5,1683.0,1178.8,1690.9C1204.1,1698.8,1229.4,1695.1,1254.8,1702.8C1280.1,1710.5,1305.4,1737.3,1330.7,1737.3C1356.0,1737.3,1381.3,1706.8,1406.6,1706.8C1431.9,1706.8,1457.2,1720.9,1482.5,1720.9C1507.8,1720.9,1533.1,1717.3,1558.4,1717.3C1583.7,1717.3,1609.0,1741.7,1634.3,1741.7C1659.6,1741.7,1684.9,1710.4,1710.2,1710.4C1735.5,1710.4,1760.8,1739.3,1786.1,1739.3C1811.4,1739.3,1836.7,1679.8,1862.0,1658.4C1887.3,1637.0,1912.6,1610.8,1937.9,1610.8C1963.2,1610.8,1988.5,1691.6,2013.9,1701.5C2039.2,1711.4,2064.5,1712.2,2089.8,1716.4C2115.1,1720.6,2140.4,1722.3,2165.7,1726.8C2191.0,1731.3,2216.3,1743.2,2241.6,1743.2C2266.9,1743.2,2292.2,1741.1,2317.5,1741.1C2342.8,1741.1,2368.1,1748.5,2393.4,1748.5C2418.7,1748.5,2444.0,1735.6,2469.3,1729.8C2494.6,1724.0,2519.9,1718.5,2545.2,1713.4C2570.5,1708.3,2595.8,1704.1,2621.1,1699.4C2646.4,1694.7,2671.7,1687.2,2697.0,1685.2C2722.3,1683.2,2747.6,1682.2,2773.0,1682.2C2798.3,1682.2,2823.6,1724.2,2848.9,1752.0C2874.2,1779.8,2899.5,1848.7,2924.8,1848.7C2950.1,1848.7,2975.4,1734.2,3000.7,1688.1C3026.0,1642.0,3051.3,1572.2,3076.6,1572.2C3101.9,1572.2,3127.2,1689.7,3152.5,1807.1L3152.5,1963.6L875.2,1963.6Z" fill="url(#gd)"/><path d="M875.2,1767.5C900.5,1610.1,925.8,1452.7,951.1,1452.7C976.4,1452.7,1001.7,1701.6,1027.0,1701.6C1052.3,1701.6,1077.6,1618.2,1102.9,1618.2C1128.2,1618.2,1153.5,1731.2,1178.8,1740.5C1204.1,1749.8,1229.4,1749.8,1254.8,1754.4C1280.1,1759.0,1305.4,1768.3,1330.7,1768.3C1356.0,1768.3,1381.3,1766.3,1406.6,1766.3C1431.9,1766.3,1457.2,1787.8,1482.5,1787.8C1507.8,1787.8,1533.1,1779.9,1558.4,1777.4C1583.7,1774.9,1609.0,1772.9,1634.3,1772.9C1659.6,1772.9,1684.9,1786.7,1710.2,1790.7C1735.5,1794.7,1760.8,1796.7,1786.1,1796.7C1811.4,1796.7,1836.7,1769.5,1862.0,1753.6C1887.3,1737.7,1912.6,1701.5,1937.9,1701.5C1963.2,1701.5,1988.5,1752.0,2013.9,1752.0C2039.2,1752.0,2064.5,1749.5,2089.8,1749.1C2115.1,1748.7,2140.4,1748.5,2165.7,1748.5C2191.0,1748.5,2216.3,1760.4,2241.6,1764.0C2266.9,1767.6,2292.2,1766.0,2317.5,1769.9C2342.8,1773.8,2368.1,1805.0,2393.4,1805.0C2418.7,1805.0,2444.0,1780.3,2469.3,1774.4C2494.6,1768.5,2519.9,1771.0,2545.2,1765.5C2570.5,1760.0,2595.8,1741.7,2621.1,1741.7C2646.4,1741.7,2671.7,1741.7,2697.0,1741.7C2722.3,1741.7,2747.6,1745.1,2773.0,1752.0C2798.3,1758.9,2823.6,1795.8,2848.9,1819.0C2874.2,1842.2,2899.5,1891.0,2924.8,1891.0C2950.1,1891.0,2975.4,1759.6,3000.7,1713.4C3026.0,1667.2,3051.3,1613.8,3076.6,1613.8C3101.9,1613.8,3127.2,1722.7,3152.5,1831.5L3152.5,1963.6L875.2,1963.6Z" fill="url(#gg)"/><path d="M875.2,1718.7C900.5,1519.2,925.8,1319.7,951.1,1319.7C976.4,1319.7,1001.7,1630.5,1027.0,1630.5C1052.3,1630.5,1077.6,1559.0,1102.9,1559.0C1128.2,1559.0,1153.5,1683.0,1178.8,1690.9C1204.1,1698.8,1229.4,1695.1,1254.8,1702.8C1280.1,1710.5,1305.4,1737.3,1330.7,1737.3C1356.0,1737.3,1381.3,1706.8,1406.6,1706.8C1431.9,1706.8,1457.2,1720.9,1482.5,1720.9C1507.8,1720.9,1533.1,1717.3,1558.4,1717.3C1583.7,1717.3,1609.0,1741.7,1634.3,1741.7C1659.6,1741.7,1684.9,1710.4,1710.2,1710.4C1735.5,1710.4,1760.8,1739.3,1786.1,1739.3C1811.4,1739.3,1836.7,1679.8,1862.0,1658.4C1887.3,1637.0,1912.6,1610.8,1937.9,1610.8C1963.2,1610.8,1988.5,1691.6,2013.9,1701.5C2039.2,1711.4,2064.5,1712.2,2089.8,1716.4C2115.1,1720.6,2140.4,1722.3,2165.7,1726.8C2191.0,1731.3,2216.3,1743.2,2241.6,1743.2C2266.9,1743.2,2292.2,1741.1,2317.5,1741.1C2342.8,1741.1,2368.1,1748.5,2393.4,1748.5C2418.7,1748.5,2444.0,1735.6,2469.3,1729.8C2494.6,1724.0,2519.9,1718.5,2545.2,1713.4C2570.5,1708.3,2595.8,1704.1,2621.1,1699.4C2646.4,1694.7,2671.7,1687.2,2697.0,1685.2C2722.3,1683.2,2747.6,1682.2,2773.0,1682.2C2798.3,1682.2,2823.6,1724.2,2848.9,1752.0C2874.2,1779.8,2899.5,1848.7,2924.8,1848.7C2950.1,1848.7,2975.4,1734.2,3000.7,1688.1C3026.0,1642.0,3051.3,1572.2,3076.6,1572.2C3101.9,1572.2,3127.2,1689.7,3152.5,1807.1" fill="none" stroke="#0f5858" stroke-width="5"/><path d="M875.2,1767.5C900.5,1610.1,925.8,1452.7,951.1,1452.7C976.4,1452.7,1001.7,1701.6,1027.0,1701.6C1052.3,1701.6,1077.6,1618.2,1102.9,1618.2C1128.2,1618.2,1153.5,1731.2,1178.8,1740.5C1204.1,1749.8,1229.4,1749.8,1254.8,1754.4C1280.1,1759.0,1305.4,1768.3,1330.7,1768.3C1356.0,1768.3,1381.3,1766.3,1406.6,1766.3C1431.9,1766.3,1457.2,1787.8,1482.5,1787.8C1507.8,1787.8,1533.1,1779.9,1558.4,1777.4C1583.7,1774.9,1609.0,1772.9,1634.3,1772.9C1659.6,1772.9,1684.9,1786.7,1710.2,1790.7C1735.5,1794.7,1760.8,1796.7,1786.1,1796.7C1811.4,1796.7,1836.7,1769.5,1862.0,1753.6C1887.3,1737.7,1912.6,1701.5,1937.9,1701.5C1963.2,1701.5,1988.5,1752.0,2013.9,1752.0C2039.2,1752.0,2064.5,1749.5,2089.8,1749.1C2115.1,1748.7,2140.4,1748.5,2165.7,1748.5C2191.0,1748.5,2216.3,1760.4,2241.6,1764.0C2266.9,1767.6,2292.2,1766.0,2317.5,1769.9C2342.8,1773.8,2368.1,1805.0,2393.4,1805.0C2418.7,1805.0,2444.0,1780.3,2469.3,1774.4C2494.6,1768.5,2519.9,1771.0,2545.2,1765.5C2570.5,1760.0,2595.8,1741.7,2621.1,1741.7C2646.4,1741.7,2671.7,1741.7,2697.0,1741.7C2722.3,1741.7,2747.6,1745.1,2773.0,1752.0C2798.3,1758.9,2823.6,1795.8,2848.9,1819.0C2874.2,1842.2,2899.5,1891.0,2924.8,1891.0C2950.1,1891.0,2975.4,1759.6,3000.7,1713.4C3026.0,1667.2,3051.3,1613.8,3076.6,1613.8C3101.9,1613.8,3127.2,1722.7,3152.5,1831.5" fill="none" stroke="#14b885" stroke-width="5"/><path d="M4353.50,1564.70A214,214 0 1 0 4206.44,1767.96L4181.98,1693.69A135.8,135.8 0 1 1 4275.30,1564.70Z" fill="#12b886" stroke="#fff" stroke-width="4"/><path d="M4206.44,1767.96A214,214 0 0 0 4320.24,1679.28L4254.19,1637.41A135.8,135.8 0 0 1 4181.98,1693.69Z" fill="#f59e0b" stroke="#fff" stroke-width="4"/><path d="M4320.24,1679.28A214,214 0 0 0 4353.49,1566.47L4275.30,1565.83A135.8,135.8 0 0 1 4254.19,1637.41Z" fill="#ef4444" stroke="#fff" stroke-width="4"/><line x1="875.0" x2="4892.0" y1="3083.6" y2="3083.6" stroke="#f2f2f2" stroke-width="2.5" stroke-dasharray="7.5 7.5"/><line x1="875.0" x2="4892.0" y1="2918.0" y2="2918.0" stroke="#f2f2f2" stroke-width="2.5" stroke-dasharray="7.5 7.5"/><line x1="875.0" x2="4892.0" y1="2752.4" y2="2752.4" stroke="#f2f2f2" stroke-width="2.5" stroke-dasharray="7.5 7.5"/><line x1="875.0" x2="4892.0" y1="2586.9" y2="2586.9" stroke="#f2f2f2" stroke-width="2.5" stroke-dasharray="7.5 7.5"/><line x1="875.0" x2="4892.0" y1="2421.3" y2="2421.3" stroke="#f2f2f2" stroke-width="2.5" stroke-dasharray="7.5 7.5"/><line x1="875.0" x2="875.0" y1="2421.3" y2="3083.6" stroke="#f6f6f6" stroke-width="2.5" stroke-dasharray="7.5 7.5"/><line x1="1008.9" x2="1008.9" y1="2421.3" y2="3083.6" stroke="#f6f6f6" stroke-width="2.5" stroke-dasharray="7.5 7.5"/><line x1="1142.8" x2="1142.8" y1="2421.3" y2="3083.6" stroke="#f6f6f6" stroke-width="2.5" stroke-dasharray="7.5 7.5"/><line x1="1276.7" x2="1276.7" y1="2421.3" y2="3083.6" stroke="#f6f6f6" stroke-width="2.5" stroke-dasharray="7.5 7.5"/><line x1="1410.6" x2="1410.6" y1="2421.3" y2="3083.6" stroke="#f6f6f6" stroke-width="2.5" stroke-dasharray="7.5 7.5"/><line x1="1544.5" x2="1544.5" y1="2421.3" y2="3083.6" stroke="#f6f6f6" stroke-width="2.5" stroke-dasharray="7.5 7.5"/><line x1="1678.4" x2="1678.4" y1="2421.3" y2="3083.6" stroke="#f6f6f6" stroke-width="2.5" stroke-dasharray="7.5 7.5"/><line x1="1812.3" x2="1812.3" y1="2421.3" y2="3083.6" stroke="#f6f6f6" stroke-width="2.5" stroke-dasharray="7.5 7.5"/><line x1="1946.2" x2="1946.2" y1="2421.3" y2="3083.6" stroke="#f6f6f6" stroke-width="2.5" stroke-dasharray="7.5 7.5"/><line x1="2080.1" x2="2080.1" y1="2421.3" y2="3083.6" stroke="#f6f6f6" stroke-width="2.5" stroke-dasharray="7.5 7.5"/><line x1="2214.0" x2="2214.0" y1="2421.3" y2="3083.6" stroke="#f6f6f6" stroke-width="2.5" stroke-dasharray="7.5 7.5"/><line x1="2347.9" x2="2347.9" y1="2421.3" y2="3083.6" stroke="#f6f6f6" stroke-width="2.5" stroke-dasharray="7.5 7.5"/><line x1="2481.8" x2="2481.8" y1="2421.3" y2="3083.6" stroke="#f6f6f6" stroke-width="2.5" stroke-dasharray="7.5 7.5"/><line x1="2615.7" x2="2615.7" y1="2421.3" y2="3083.6" stroke="#f6f6f6" stroke-width="2.5" stroke-dasharray="7.5 7.5"/><line x1="2749.6" x2="2749.6" y1="2421.3" y2="3083.6" stroke="#f6f6f6" stroke-width="2.5" stroke-dasharray="7.5 7.5"/><line x1="2883.5" x2="2883.5" y1="2421.3" y2="3083.6" stroke="#f6f6f6" stroke-width="2.5" stroke-dasharray="7.5 7.5"/><line x1="3017.4" x2="3017.4" y1="2421.3" y2="3083.6" stroke="#f6f6f6" stroke-width="2.5" stroke-dasharray="7.5 7.5"/><line x1="3151.3" x2="3151.3" y1="2421.3" y2="3083.6" stroke="#f6f6f6" stroke-width="2.5" stroke-dasharray="7.5 7.5"/><line x1="3285.2" x2="3285.2" y1="2421.3" y2="3083.6" stroke="#f6f6f6" stroke-width="2.5" stroke-dasharray="7.5 7.5"/><line x1="3419.1" x2="3419.1" y1="2421.3" y2="3083.6" stroke="#f6f6f6" stroke-width="2.5" stroke-dasharray="7.5 7.5"/><line x1="3553.0" x2="3553.0" y1="2421.3" y2="3083.6" stroke="#f6f6f6" stroke-width="2.5" stroke-dasharray="7.5 7.5"/><line x1="3686.9" x2="3686.9" y1="2421.3" y2="3083.6" stroke="#f6f6f6" stroke-width="2.5" stroke-dasharray="7.5 7.5"/><line x1="3820.8" x2="3820.8" y1="2421.3" y2="3083.6" stroke="#f6f6f6" stroke-width="2.5" stroke-dasharray="7.5 7.5"/><line x1="3954.7" x2="3954.7" y1="2421.3" y2="3083.6" stroke="#f6f6f6" stroke-width="2.5" stroke-dasharray="7.5 7.5"/><line x1="4088.6" x2="4088.6" y1="2421.3" y2="3083.6" stroke="#f6f6f6" stroke-width="2.5" stroke-dasharray="7.5 7.5"/><line x1="4222.5" x2="4222.5" y1="2421.3" y2="3083.6" stroke="#f6f6f6" stroke-width="2.5" stroke-dasharray="7.5 7.5"/><line x1="4356.4" x2="4356.4" y1="2421.3" y2="3083.6" stroke="#f6f6f6" stroke-width="2.5" stroke-dasharray="7.5 7.5"/><line x1="4490.3" x2="4490.3" y1="2421.3" y2="3083.6" stroke="#f6f6f6" stroke-width="2.5" stroke-dasharray="7.5 7.5"/><line x1="4624.2" x2="4624.2" y1="2421.3" y2="3083.6" stroke="#f6f6f6" stroke-width="2.5" stroke-dasharray="7.5 7.5"/><line x1="4758.1" x2="4758.1" y1="2421.3" y2="3083.6" stroke="#f6f6f6" stroke-width="2.5" stroke-dasharray="7.5 7.5"/><line x1="4892.0" x2="4892.0" y1="2421.3" y2="3083.6" stroke="#f6f6f6" stroke-width="2.5" stroke-dasharray="7.5 7.5"/><path d="M875.0,2904.6C919.6,2835.3,964.3,2766.0,1008.9,2766.0C1053.5,2766.0,1098.2,2878.4,1142.8,2878.4C1187.4,2878.4,1232.1,2831.5,1276.7,2831.5C1321.3,2831.5,1366.0,2894.4,1410.6,2894.4C1455.2,2894.4,1499.9,2876.1,1544.5,2876.1C1589.1,2876.1,1633.8,2915.1,1678.4,2915.1C1723.0,2915.1,1767.7,2911.5,1812.3,2909.9C1856.9,2908.4,1901.6,2908.5,1946.2,2905.8C1990.8,2903.1,2035.5,2893.3,2080.1,2893.3C2124.7,2893.3,2169.4,2932.4,2214.0,2932.4C2258.6,2932.4,2303.3,2879.5,2347.9,2879.5C2392.5,2879.5,2437.2,2906.5,2481.8,2906.5C2526.4,2906.5,2571.1,2867.8,2615.7,2867.8C2660.3,2867.8,2705.0,2877.1,2749.6,2882.3C2794.2,2887.5,2838.9,2898.9,2883.5,2898.9C2928.1,2898.9,2972.8,2866.8,3017.4,2866.8C3062.0,2866.8,3106.7,2871.5,3151.3,2875.4C3195.9,2879.3,3240.6,2882.5,3285.2,2890.0C3329.8,2897.5,3374.5,2920.3,3419.1,2920.3C3463.7,2920.3,3508.4,2879.5,3553.0,2879.5C3597.6,2879.5,3642.3,2918.5,3686.9,2918.5C3731.5,2918.5,3776.2,2859.8,3820.8,2859.8C3865.4,2859.8,3910.1,2860.2,3954.7,2860.9C3999.3,2861.6,4044.0,2866.3,4088.6,2877.1C4133.2,2887.9,4177.9,2921.7,4222.5,2941.0C4267.1,2960.3,4311.8,2992.8,4356.4,2992.8C4401.0,2992.8,4445.7,2991.6,4490.3,2989.3C4534.9,2987.0,4579.6,2866.1,4624.2,2786.0C4668.8,2705.9,4713.5,2508.6,4758.1,2508.6C4802.7,2508.6,4847.4,2655.0,4892.0,2801.4L4892.0,3083.6L875.0,3083.6Z" fill="url(#gi)"/><path d="M875.0,2904.6C919.6,2835.3,964.3,2766.0,1008.9,2766.0C1053.5,2766.0,1098.2,2878.4,1142.8,2878.4C1187.4,2878.4,1232.1,2831.5,1276.7,2831.5C1321.3,2831.5,1366.0,2894.4,1410.6,2894.4C1455.2,2894.4,1499.9,2876.1,1544.5,2876.1C1589.1,2876.1,1633.8,2915.1,1678.4,2915.1C1723.0,2915.1,1767.7,2911.5,1812.3,2909.9C1856.9,2908.4,1901.6,2908.5,1946.2,2905.8C1990.8,2903.1,2035.5,2893.3,2080.1,2893.3C2124.7,2893.3,2169.4,2932.4,2214.0,2932.4C2258.6,2932.4,2303.3,2879.5,2347.9,2879.5C2392.5,2879.5,2437.2,2906.5,2481.8,2906.5C2526.4,2906.5,2571.1,2867.8,2615.7,2867.8C2660.3,2867.8,2705.0,2877.1,2749.6,2882.3C2794.2,2887.5,2838.9,2898.9,2883.5,2898.9C2928.1,2898.9,2972.8,2866.8,3017.4,2866.8C3062.0,2866.8,3106.7,2871.5,3151.3,2875.4C3195.9,2879.3,3240.6,2882.5,3285.2,2890.0C3329.8,2897.5,3374.5,2920.3,3419.1,2920.3C3463.7,2920.3,3508.4,2879.5,3553.0,2879.5C3597.6,2879.5,3642.3,2918.5,3686.9,2918.5C3731.5,2918.5,3776.2,2859.8,3820.8,2859.8C3865.4,2859.8,3910.1,2860.2,3954.7,2860.9C3999.3,2861.6,4044.0,2866.3,4088.6,2877.1C4133.2,2887.9,4177.9,2921.7,4222.5,2941.0C4267.1,2960.3,4311.8,2992.8,4356.4,2992.8C4401.0,2992.8,4445.7,2991.6,4490.3,2989.3C4534.9,2987.0,4579.6,2866.1,4624.2,2786.0C4668.8,2705.9,4713.5,2508.6,4758.1,2508.6C4802.7,2508.6,4847.4,2655.0,4892.0,2801.4" fill="none" stroke="#6366f1" stroke-width="5"/></svg>
<div class="botline"></div>
</body></html>
